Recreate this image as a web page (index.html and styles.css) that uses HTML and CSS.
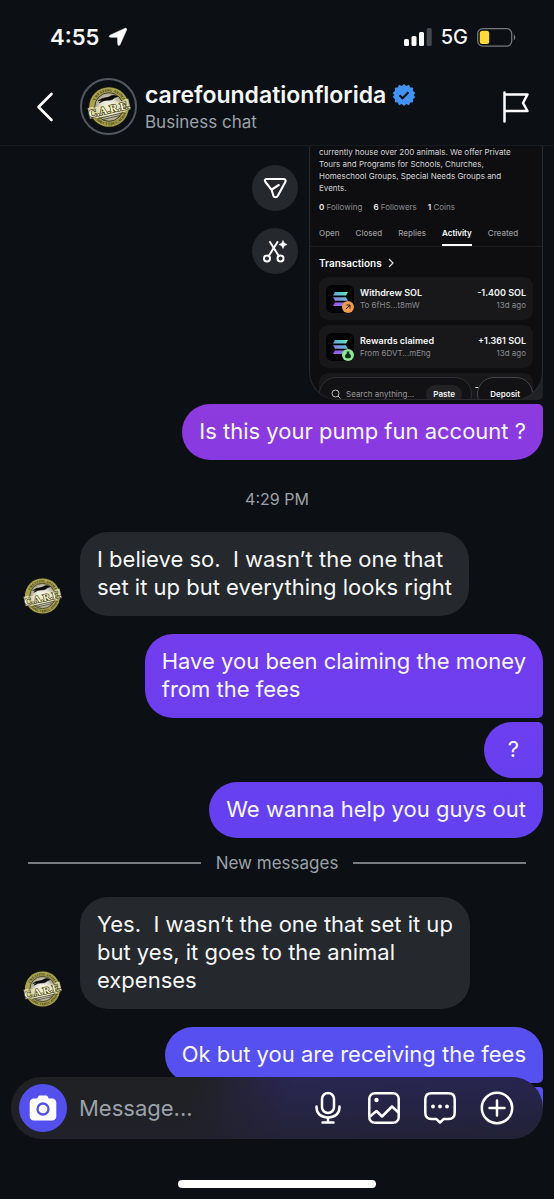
FILE: index.html
```html
<!DOCTYPE html>
<html lang="en">
<head>
<meta charset="utf-8">
<meta name="viewport" content="width=device-width, initial-scale=1">
<title>carefoundationflorida</title>
<link rel="stylesheet" href="styles.css">
</head>
<body>
<svg class="defs" width="0" height="0" aria-hidden="true">
  <defs>
    <radialGradient id="seal">
      <stop offset="0" stop-color="#fff"/>
      <stop offset=".55" stop-color="#e4e1d5"/>
      <stop offset="1" stop-color="#a09b83"/>
    </radialGradient>
    <linearGradient id="sol-top"><stop offset="0" stop-color="#6fa0dc"/><stop offset="1" stop-color="#5be8bb"/></linearGradient>
    <linearGradient id="sol-mid"><stop offset="0" stop-color="#8c7be0"/><stop offset="1" stop-color="#62bfd2"/></linearGradient>
    <linearGradient id="sol-low"><stop offset="0" stop-color="#a352f0"/><stop offset="1" stop-color="#7a86e0"/></linearGradient>
    <path id="arc-top" d="M6 20a14 14 0 0 1 28 0"/>
    <path id="arc-bottom" d="M3.400 20a16.600 16.600 0 0 0 33.200 0"/>
    <symbol id="logo" viewBox="0 0 40 40">
      <circle cx="20" cy="20" r="19" fill="#15160f"/>
      <circle cx="20" cy="20" r="18" fill="#aaa34c"/>
      <circle cx="20" cy="20" r="13" fill="url(#seal)" stroke="#34331b" stroke-width=".8"/>
      <g font-family="Liberation Serif, serif" font-weight="700" font-size="3.500" fill="#33311a">
        <text><textPath href="#arc-top" startOffset="14%">CREATING ANIMAL</textPath></text>
        <text><textPath href="#arc-bottom" startOffset="16%">RESPECT EDUCATION</textPath></text>
      </g>
      <path d="M10 14.500c2-1 3-2.500 5.500-2.700 2.500-.3 4-.6 6-1.700 1.500-1 3-1 4.500-.4l2 .8-2.500.9c-1.500.8-2 2-4 2.300l-5 .3c-2 .2-3.500 1.700-5.500 2.200l3-2.500z" fill="#080808" stroke="#080808" stroke-width=".5"/>
      <g transform="rotate(-13 20 21)">
        <path d="M1 16.500h5v1h28v-1h5v10h-5v1H6v-1H1z" fill="#eee9b8" opacity=".75"/>
        <text x="20" y="25.500" text-anchor="middle" font-family="Liberation Serif, serif" font-weight="700" font-size="10" fill="#fbf7cf" stroke="#3b391c" stroke-width="1.300" paint-order="stroke">C.A.R.E.</text>
        <path d="M8 28h24M12 29.800h17" stroke="#55533b" stroke-width=".8"/>
      </g>
    </symbol>
    <symbol id="coin" viewBox="0 0 28 28">
      <rect width="28" height="28" rx="6" fill="#030305"/>
      <path d="M9 7h13l-2 3.500H7z" fill="url(#sol-top)"/>
      <path d="M7 12.200h13l2 3.500H9z" fill="url(#sol-mid)"/>
      <path d="M9 17.400h13l-2 3.500H7z" fill="url(#sol-low)"/>
    </symbol>
  </defs>
</svg>

<div class="app">
  <header class="top">
    <div class="status">
      <span class="clock">4:55
        <svg width="20" height="20" viewBox="0 0 20 20"><path d="M2.200 8.200 16.800 1.400c1.300-.6 2.300.3 1.700 1.700L12 17.600c-.6 1.300-2.100 1-2.200-.3L9.600 11q0-.7-.7-.7l-6.400-.1c-1.500 0-1.700-1.400-.3-2z" fill="#fff" stroke="#fff" stroke-width=".6"/></svg>
      </span>
      <span class="signals">
        <svg width="28" height="18" viewBox="0 0 28 18"><rect y="11" width="5" height="7" rx="1.500" fill="#fff"/><rect x="7.500" y="8" width="5" height="10" rx="1.500" fill="#fff"/><rect x="15" y="4" width="5" height="14" rx="1.500" fill="#fff"/><rect x="22.700" width="5" height="18" rx="1.500" fill="#44474b"/></svg>
        <span class="network">5G</span>
        <svg width="39" height="19" viewBox="0 0 39 19"><rect x=".7" y=".7" width="34" height="17.400" rx="5" fill="none" stroke="#75787b" stroke-width="1.300"/><rect x="2.800" y="2.700" width="9.400" height="13.300" rx="2.500" fill="#ffd93b"/><path d="M36.800 6.500c2 .8 2 5 0 5.800z" fill="#75787b"/></svg>
      </span>
    </div>
    <div class="nav">
      <button class="icon-btn" aria-label="Back"><svg width="18" height="30" viewBox="0 0 18 30"><path d="M15.500 2 2.500 15l13 13" fill="none" stroke="#fff" stroke-width="2.600" stroke-linecap="round" stroke-linejoin="round"/></svg></button>
      <span class="ring"><svg width="44" height="44"><use href="#logo"/></svg></span>
      <div class="who">
        <h1 class="name">carefoundationflorida
          <svg width="24" height="24" viewBox="0 0 24 24"><path d="M12 1l2.200 2L17 1.800l1.200 2.700 3 .3-.3 3L23.300 10 21.800 12l1.500 2.200-2.400 2 .3 3-3 .3-1.200 2.700-2.800-1.200L12 23l-2.200-2L7 22.200l-1.200-2.700-3-.3.300-3L.7 14l1.500-2-1.500-2 2.400-2.200-.3-3 3-.3L7 1.800 9.800 3z" fill="#4293f5"/><path d="m7.500 12.300 3 3 6-6" fill="none" stroke="#0c1014" stroke-width="2"/></svg>
        </h1>
        <p class="sub">Business chat</p>
      </div>
      <button class="icon-btn" aria-label="Flag"><svg width="28" height="32" viewBox="0 0 28 32"><path d="M2.500 1.500v29M2.500 3.500h23l-4.500 8.500 4.500 8h-23" fill="none" stroke="#fff" stroke-width="2.500" stroke-linecap="round" stroke-linejoin="round"/></svg></button>
    </div>
  </header>

  <main class="chat">
    <div class="shared">
      <div class="tools">
        <button class="tool" aria-label="Send"><svg width="24" height="24" viewBox="0 0 24 24"><path d="M3.500 3h17c1.800 0 2.700 1.500 1.800 3l-7.600 14c-.9 1.700-3.500 1.700-4.300-.2l-1.800-6L2.500 6C1.300 4.500 2 3 3.500 3zM8.800 13.500l7-4.500" fill="none" stroke="#fff" stroke-width="2.100" stroke-linejoin="round" stroke-linecap="round"/></svg></button>
        <button class="tool" aria-label="Cut out"><svg width="26" height="26" viewBox="0 0 26 26"><g fill="none" stroke="#fff" stroke-width="2" stroke-linecap="round"><circle cx="5" cy="20.500" r="3"/><circle cx="18.500" cy="20.500" r="3"/><path d="M6.700 18 15.500 4M16.800 18 8 4"/></g><path d="M21 2.500l1.200 2.800L25 6.500l-2.800 1.200L21 10.500l-1.200-2.800L17 6.500l2.800-1.200z" fill="#fff" stroke="#fff" stroke-width=".6"/></svg></button>
      </div>
      <article class="shot">
        <div class="screen">
          <p class="bio">currently house over 200 animals. We offer Private<br>Tours and Programs for Schools, Churches,<br>Homeschool Groups, Special Needs Groups and<br>Events.</p>
          <p class="stats"><span><b>0</b> Following</span><span><b>6</b> Followers</span><span><b>1</b> Coins</span></p>
          <nav class="tabs"><span>Open</span><span>Closed</span><span>Replies</span><span class="active">Activity</span><span>Created</span></nav>
          <h2 class="heading">Transactions <svg width="6" height="10" viewBox="0 0 6 10"><path d="m1 1 4 4-4 4" fill="none" stroke="#ddd" stroke-width="1.200"/></svg></h2>
          <div class="list">
            <div class="tx">
              <span class="coin"><svg width="28" height="28"><use href="#coin"/></svg><svg class="mark" width="12" height="12" viewBox="0 0 12 12"><circle cx="6" cy="6" r="6" fill="#f09a50"/><path d="M4 8l4-4M4.500 4H8v3.500" fill="none" stroke="#33200f"/></svg></span>
              <span class="what"><b>Withdrew SOL</b><small>To 6fHS...t8mW</small></span>
              <span class="sum"><b>-1.400 SOL</b><small>13d ago</small></span>
            </div>
            <div class="tx">
              <span class="coin"><svg width="28" height="28"><use href="#coin"/></svg><svg class="mark" width="12" height="12" viewBox="0 0 12 12"><circle cx="6" cy="6" r="6" fill="#8fe79a"/><path d="M4.500 2.500h3L7 4.200c1.300.7 2 2 2 3.200 0 1.300-1 1.800-3 1.800s-3-.5-3-1.800c0-1.200.7-2.500 2-3.200z" fill="#14301b"/></svg></span>
              <span class="what"><b>Rewards claimed</b><small>From 6DVT...mEhg</small></span>
              <span class="sum"><b>+1.361 SOL</b><small>13d ago</small></span>
            </div>
            <div class="tx next"><b>-</b></div>
          </div>
          <div class="dock">
            <span class="search"><svg width="10" height="10" viewBox="0 0 10 10"><circle cx="4.500" cy="4.500" r="3.500" fill="none" stroke="#bbb"/><path d="m7 7 2.500 2.500" stroke="#bbb"/></svg><span class="hint">Search anything...</span><b class="paste">Paste</b></span>
            <b class="deposit">Deposit</b>
          </div>
        </div>
      </article>
    </div>
    <p class="bubble out last">Is this your pump fun account ?</p>

    <time class="time">4:29 PM</time>

    <div class="in">
      <svg class="avatar" width="40" height="40"><use href="#logo"/></svg>
      <p class="bubble">I believe so.&nbsp; I wasn’t the one that<br>set it up but everything looks right</p>
    </div>

    <p class="bubble out first">Have you been claiming the money<br>from the fees</p>
    <p class="bubble out middle">?</p>
    <p class="bubble out last">We wanna help you guys out</p>

    <div class="divider"><span>New messages</span></div>

    <div class="in">
      <svg class="avatar" width="40" height="40"><use href="#logo"/></svg>
      <p class="bubble">Yes.&nbsp; I wasn’t the one that set it up<br>but yes, it goes to the animal<br>expenses</p>
    </div>

    <p class="bubble out first">Ok but you are receiving the fees</p>
    <p class="bubble out last" aria-hidden="true">&nbsp;</p>
  </main>

  <footer class="bottom">
    <form class="composer">
      <button type="button" class="camera" aria-label="Camera"><svg width="28" height="26" viewBox="0 0 28 26"><path d="M5 3.500h2.500c.8 0 1-.5 1.500-1.500C9.500.8 10.300.5 11.300.5h5.400c1 0 1.800.3 2.300 1.500.5 1 .7 1.500 1.500 1.500H23c2.600 0 4.300 1.700 4.300 4.300v13.400c0 2.600-1.700 4.300-4.300 4.300H5c-2.600 0-4.300-1.700-4.300-4.300V7.800c0-2.600 1.700-4.300 4.300-4.300z" fill="#fff"/><circle cx="14" cy="14" r="5.500" fill="none" stroke="#5450ee" stroke-width="2.300"/></svg></button>
      <input class="field" type="text" placeholder="Message..." aria-label="Message">
      <button type="button" class="icon-btn" aria-label="Voice message"><svg width="32" height="34" viewBox="0 0 32 34" fill="none" stroke="#fff" stroke-width="2.500" stroke-linecap="round"><rect x="10" y="2" width="12" height="20" rx="6"/><path d="M4.500 15.500v1c0 6 4.500 10 11.500 10s11.500-4 11.500-10v-1M16 27v4M10.500 31.500h11"/></svg></button>
      <button type="button" class="icon-btn" aria-label="Photo"><svg width="32" height="34" viewBox="0 0 32 34" fill="none" stroke="#fff" stroke-width="2.500" stroke-linejoin="round"><rect x="1.300" y="2.300" width="29.400" height="29.400" rx="5.500"/><path d="m2 25.500 6.500-5.500 5.500 5.500 10-10 6.500 6"/><circle cx="8.500" cy="9" r="2.200" fill="#fff" stroke="none"/></svg></button>
      <button type="button" class="icon-btn" aria-label="Quick replies"><svg width="32" height="34" viewBox="0 0 32 34" fill="none" stroke="#fff" stroke-width="2.500" stroke-linejoin="round"><path d="M7.500 2.300h17c4 0 6.200 2.200 6.200 6.200v13.200c0 4-2.200 6.200-6.200 6.200h-4.700L16 31.500l-3.800-3.600H7.500c-4 0-6.200-2.200-6.200-6.200V8.500c0-4 2.200-6.200 6.200-6.200z"/><g fill="#fff" stroke="none"><circle cx="9" cy="15.500" r="1.900"/><circle cx="16" cy="15.500" r="1.900"/><circle cx="23" cy="15.500" r="1.900"/></g></svg></button>
      <button type="button" class="icon-btn" aria-label="More"><svg width="34" height="34" viewBox="0 0 34 34" fill="none" stroke="#fff" stroke-width="2.500" stroke-linecap="round"><circle cx="17" cy="17" r="15.200"/><path d="M17 9.500v15M9.500 17h15"/></svg></button>
    </form>
    <div class="home"></div>
  </footer>
</div>
</body>
</html>
```

FILE: styles.css
```css
* { box-sizing: border-box; }

body {
  margin: 0;
  background: #0c1014;
  color: #f5f7f8;
  font-family: Inter, "Liberation Sans", sans-serif;
}

p, h1, h2 { margin: 0; }
svg { display: block; flex: none; }
button { padding: 0; border: 0; background: none; cursor: pointer; }

.defs { position: absolute; }

.app {
  position: relative;
  display: flex;
  flex-direction: column;
  height: 100vh;
  overflow: hidden;
}

/* Status bar and conversation header */
.top {
  flex: none;
  padding: 20px 24px 10px 36px;
  border-bottom: 1px solid #171b1f;
}

.status {
  display: flex;
  justify-content: space-between;
  align-items: center;
  height: 34px;
  padding: 0 14px;
}

.clock {
  display: flex;
  align-items: center;
  gap: 9px;
  font-size: 22px;
  font-weight: 600;
}

.signals { display: flex; align-items: center; gap: 9px; }
.network { font-size: 20px; font-weight: 500; }

.nav {
  display: flex;
  align-items: center;
  padding-top: 24px;
}

.icon-btn { flex: none; }

.ring {
  flex: none;
  display: grid;
  place-items: center;
  width: 57px;
  height: 57px;
  margin-left: 26px;
  border: 2px solid #50575f;
  border-radius: 50%;
}

.who { flex: 1; margin-left: 8px; padding-top: 2px; }

.name {
  display: flex;
  align-items: center;
  gap: 6px;
  font-size: 23px;
  line-height: 28px;
  font-weight: 600;
}

.sub { color: #9ba1a9; font-size: 17px; line-height: 26px; }

/* Conversation */
.chat {
  flex: 1;
  min-height: 0;
  display: flex;
  flex-direction: column;
  gap: 4px;
  padding: 0 11px;
  overflow: hidden;
}

.chat > * { flex: none; }

.shared { display: flex; justify-content: flex-end; gap: 11px; }

.tools {
  display: flex;
  flex-direction: column;
  gap: 17px;
  padding-top: 19px;
}

.tool {
  display: grid;
  place-items: center;
  width: 46px;
  height: 46px;
  border-radius: 50%;
  background: #25282c;
}

.bubble {
  width: fit-content;
  padding: 13px 17px 15px;
  border-radius: 28px;
  background: #25282c;
  font-size: 22px;
  line-height: 28px;
}

.out {
  align-self: flex-end;
  background: linear-gradient(#a038d4 15%, #8b3adf 36%, #713dee 55%, #6540f0 68%, #5750f0 87%) fixed;
}

.first { margin-top: 14px; border-bottom-right-radius: 5px; }
.middle { padding-inline: 24px; border-top-right-radius: 5px; border-bottom-right-radius: 5px; }
.last { border-top-right-radius: 5px; }

.in { display: flex; align-items: flex-end; gap: 18px; padding-left: 12px; }
.avatar { width: 39px; overflow: visible; }

.time {
  align-self: center;
  padding: 23px 0 17px;
  color: #9ba1a9;
  font-size: 16px;
  line-height: 24px;
}

.divider {
  display: flex;
  align-items: center;
  gap: 15px;
  padding: 9px 17px 18px;
  color: #9ba1a9;
  font-size: 17px;
  line-height: 24px;
}

.divider::before,
.divider::after {
  content: "";
  flex: 1;
  height: 2px;
  background: #777d83;
}

/* Shared phone screen */
.shot {
  width: 234px;
  height: 254px;
  overflow: hidden;
  border-radius: 0 0 5px 28px;
  background: #202226;
}

.screen {
  position: relative;
  height: 100%;
  overflow: hidden;
  border: 1px solid #2a2b2e;
  border-top: 0;
  border-radius: 0 0 28px 28px;
  background: #0e0e10;
  font-size: 8px;
  line-height: 12px;
}

.bio { padding: 0 9px; color: #d4d4d6; white-space: nowrap; }

.stats { display: flex; gap: 11px; padding: 7px 9px; color: #8c8c90; }
.stats b { color: #f0f0f0; font-weight: 600; }

.tabs {
  display: flex;
  gap: 16px;
  padding: 5px 9px 0;
  border-bottom: 1px solid #1c1c1f;
  color: #99999d;
  font-weight: 500;
}

.tabs span { padding: 2px 0 5px; border-bottom: 2px solid transparent; }
.tabs .active { color: #fff; border-color: #fff; font-weight: 600; }

.heading {
  display: flex;
  align-items: center;
  gap: 6px;
  padding: 10px 9px 8px;
  font-size: 10px;
  line-height: 12px;
  font-weight: 600;
}

.list { display: grid; gap: 5px; padding: 0 9px; }

.tx {
  display: flex;
  align-items: center;
  gap: 6px;
  height: 43px;
  padding: 0 7px;
  border-radius: 9px;
  background: #18181a;
}

.tx b, .tx small { display: block; line-height: 12px; }
.tx b { font-size: 9px; font-weight: 600; }
.tx small { color: #8b8b8f; font-size: 8px; }
.what { flex: 1; }
.sum { text-align: right; }
.next { align-items: flex-start; justify-content: flex-end; padding: 8px 54px; }

.coin { position: relative; }
.mark { position: absolute; right: 0; bottom: 0; }

.dock {
  position: absolute;
  top: 231px;
  left: 9px;
  right: 9px;
  display: flex;
  justify-content: space-between;
}

.search, .deposit {
  display: flex;
  align-items: center;
  height: 34px;
  border: 1px solid #303034;
  border-radius: 17px;
  background: #121214;
}

.search { gap: 5px; padding: 0 9px 0 11px; white-space: nowrap; }
.hint { color: #98989c; }
.paste {
  margin-left: 7px;
  padding: 3px 7px;
  border-radius: 9px;
  background: #222225;
  font-weight: 600;
}
.deposit { padding: 0 12px; font-weight: 600; border-color: #47474b; }

/* Composer floating over the conversation */
.bottom {
  position: absolute;
  left: 0;
  right: 0;
  bottom: 0;
  padding: 0 11px 11px;
}

.bottom::before {
  content: "";
  position: absolute;
  inset: 31px 0 0;
  background: #0c1014;
}

.composer {
  position: relative;
  display: flex;
  align-items: center;
  gap: 24px;
  height: 62px;
  padding: 0 29px 0 8px;
  border-radius: 31px;
  background:
    linear-gradient(rgba(32, 33, 36, 0) 10%, rgba(32, 33, 44, .7)),
    linear-gradient(100deg, #202123 34%, #292650 52%, #26244c);
}

.camera {
  flex: none;
  display: grid;
  place-items: center;
  width: 48px;
  height: 48px;
  border-radius: 50%;
  background: #5450ee;
}

.field {
  flex: 1;
  min-width: 0;
  margin-left: -12px;
  padding: 0;
  border: 0;
  outline: 0;
  background: none;
  color: #f5f7f8;
  font: 400 22px/28px Inter, "Liberation Sans", sans-serif;
}

.field::placeholder { color: #9ba1a9; opacity: 1; }

.home {
  position: relative;
  width: 198px;
  height: 8px;
  margin: 41px auto 0;
  border-radius: 4px;
  background: #fff;
}
```
